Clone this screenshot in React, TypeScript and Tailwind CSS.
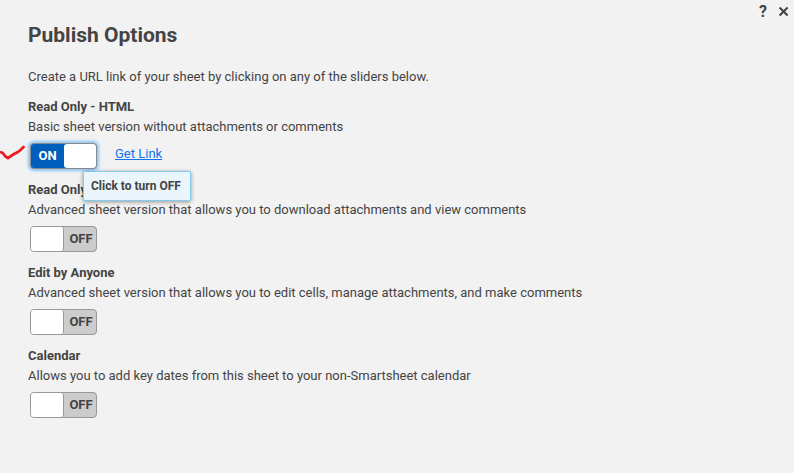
import { useState, type ReactNode } from "react";

function Toggle({ on, label, onToggle }: { on: boolean; label: string; onToggle: () => void }) {
  return (
    <button
      type="button"
      role="switch"
      aria-checked={on}
      aria-label={label}
      onClick={onToggle}
      className={
        on
          ? "relative flex h-[26px] w-[67px] overflow-visible rounded-[4px] border border-[#8c8c8c] bg-[#005ebc] shadow-[0_0_3px_2px_#8fc3f5] outline-none"
          : "relative flex h-[26px] w-[67px] rounded-[4px] border border-[#999999] bg-[#cccccc] outline-none"
      }
    >
      {on ? (
        <>
          <span className="w-[33px] text-center text-[13px] leading-6 font-bold text-white">ON</span>
          <span className="h-6 flex-1 rounded-[3px] bg-white" />
        </>
      ) : (
        <>
          <span className="h-6 w-[33px] rounded-[3px] border-r border-[#999999] bg-white" />
          <span className="flex-1 pl-[2px] text-center text-[13px] leading-6 font-bold text-[#444444]">OFF</span>
        </>
      )}
    </button>
  );
}

function Option({ title, description, children }: { title: string; description: string; children: ReactNode }) {
  return (
    <section className="h-[83px]">
      <h2 className="text-[13px] leading-5 font-bold">{title}</h2>
      <p className="text-[13px] leading-5">{description}</p>
      <div className="mt-[6px] ml-[2px] flex">{children}</div>
    </section>
  );
}

const options = [
  { title: "Read Only - HTML", description: "Basic sheet version without attachments or comments" },
  { title: "Read Only", description: "Advanced sheet version that allows you to download attachments and view comments" },
  { title: "Edit by Anyone", description: "Advanced sheet version that allows you to edit cells, manage attachments, and make comments" },
  { title: "Calendar", description: "Allows you to add key dates from this sheet to your non-Smartsheet calendar" },
];

export default function App() {
  const [enabled, setEnabled] = useState([true, false, false, false]);
  const toggle = (index: number) => setEnabled(enabled.map((v, i) => (i === index ? !v : v)));

  return (
    <main className="relative h-[473px] w-[794px] overflow-hidden bg-[#f2f2f2] pl-7 font-['Roboto',sans-serif] text-[#444444]">
      <header className="flex h-[67px] justify-between">
        <h1 className="pt-[21px] text-[21px] leading-7 font-bold">Publish Options</h1>
        <div className="flex h-[22px] items-start gap-[10px] pr-[5px]">
          <button type="button" aria-label="Help" className="h-[22px] w-[10px] text-center text-[16px] leading-[23px] font-bold">?</button>
          <button type="button" aria-label="Close" className="flex h-[22px] w-[11px] items-center justify-center">
            <svg viewBox="0 0 11 10" className="h-[10px] w-[11px]" fill="none" stroke="currentColor" strokeWidth="2.1">
              <path d="M1.6 1.5 9.6 9.5M9.6 1.5 1.6 9.5" />
            </svg>
          </button>
        </div>
      </header>
      <p className="mb-[10px] text-[13px] leading-5">Create a URL link of your sheet by clicking on any of the sliders below.</p>
      {options.map((option, index) => (
        <Option key={option.title} title={option.title} description={option.description}>
          <div className="relative">
            <Toggle on={enabled[index]} label={option.title} onToggle={() => toggle(index)} />
            {index === 0 && (
              <>
                <svg className="absolute top-[2px] -left-[30px] h-4 w-[26px]" viewBox="0 0 26 16" fill="none" stroke="#ed1c24" strokeWidth="2.8" strokeLinecap="round" strokeLinejoin="round">
                  <path d="M1 7.2 3 8.2 5 11 8 13.2 11 11 14 9 18 7 21 4.5 23.5 2" />
                </svg>
                <div role="tooltip" className="absolute top-[28px] left-[53px] z-10 flex h-[30px] w-[108px] items-center rounded-[2px] border border-[#83cbed] bg-[#eaf6fb] pl-[7px] text-[12px] font-bold whitespace-nowrap shadow-[0_1px_4px_rgba(0,0,0,0.4)]">
                  Click to turn OFF
                </div>
              </>
            )}
          </div>
          {index === 0 && (
            <a href="#link" className="ml-[18px] text-[13px] leading-[22px] text-[#0f73ee] underline">Get Link</a>
          )}
        </Option>
      ))}
    </main>
  );
}
